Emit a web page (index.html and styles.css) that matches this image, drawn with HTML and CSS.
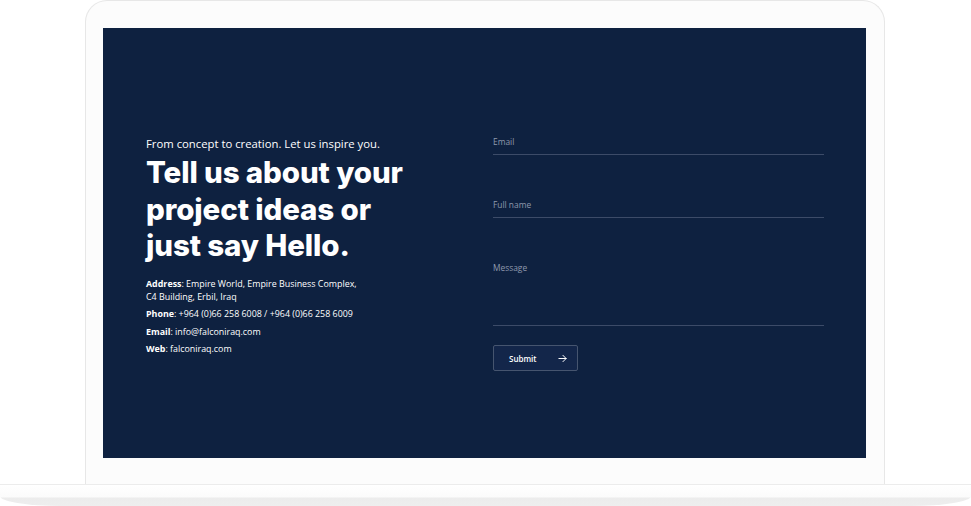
FILE: index.html
```html
<!DOCTYPE html>
<html lang="en">
<head>
<meta charset="utf-8">
<title>Contact</title>
<link rel="stylesheet" href="styles.css">
</head>
<body>
<div class="device">
  <div class="lid">
    <div class="screen">
      <div class="intro">
        <p class="kicker">From concept to creation. Let us inspire you.</p>
        <h1 class="title">Tell us about your project ideas or just say Hello.</h1>
        <div class="details">
          <p><b>Address</b>: Empire World, Empire Business Complex,<br>C4 Building, Erbil, Iraq</p>
          <p><b>Phone</b>: +964 (0)66 258 6008 / +964 (0)66 258 6009</p>
          <p><b>Email</b>: info@falconiraq.com</p>
          <p><b>Web</b>: falconiraq.com</p>
        </div>
      </div>
      <form class="form">
        <label class="field">Email</label>
        <label class="field">Full name</label>
        <label class="field field-msg">Message</label>
        <button type="button" class="submit">Submit
          <svg class="arrow" width="9" height="9" viewBox="0 0 10 10" fill="none" stroke="#ffffff" stroke-width="1.1" stroke-linecap="round" stroke-linejoin="round"><path d="M1 5h8M5.5 1.5L9 5l-3.5 3.5"/></svg>
        </button>
      </form>
    </div>
  </div>
  <div class="base"></div>
</div>
</body>
</html>
```
FILE: styles.css
```css
* { box-sizing: border-box; }
html, body { margin: 0; padding: 0; background: #ffffff; }
body { width: 971px; height: 506px; overflow: hidden; font-family: "Open Sans", "Liberation Sans", sans-serif; }

.device { width: 971px; height: 506px; display: flex; flex-direction: column; }

.lid {
  margin-left: 85px;
  width: 800px;
  height: 484px;
  padding: 27px 18px 0 17px;
  background: #fcfcfc;
  border: 1px solid #e7e7e7;
  border-bottom: none;
  border-radius: 22px 22px 0 0;
}

.screen {
  width: 763px;
  height: 430px;
  background: #0e2140;
  display: flex;
  padding: 106px 0 0 43px;
}

.intro { width: 347px; color: #ffffff; }
.kicker { margin: 2px 0 0; font-size: 11.3px; line-height: 16px; }
.title {
  margin: 2px 0 0;
  font-family: Inter, "Open Sans", sans-serif;
  font-weight: 800;
  font-size: 29.5px;
  line-height: 36.5px;
  letter-spacing: -0.1px;
  width: 270px;
}
.details { margin-top: 13px; font-size: 8.9px; line-height: 13px; }
.details p { margin: 0 0 4.5px; }
.details b { font-weight: 700; }

.form { width: 331px; display: flex; flex-direction: column; padding-top: 1px; }
.field {
  display: block;
  color: #8f99ad;
  font-size: 8.4px;
  line-height: 11px;
  height: 20px;
  padding-top: 1px;
  border-bottom: 1px solid #3c4b68;
  margin-bottom: 43px;
}
.field-msg { height: 65px; margin-bottom: 19px; }

.submit {
  width: 85px;
  height: 26px;
  padding: 0 0 0 15px;
  display: flex;
  align-items: center;
  gap: 21px;
  background: #13264a;
  border: 1px solid #46556f;
  border-radius: 2px;
  color: #ffffff;
  font-family: "Open Sans", sans-serif;
  font-size: 8px;
  font-weight: 600;
}
.arrow { display: block; }

.base {
  width: 971px;
  height: 22px;
  background: linear-gradient(#ffffff 0, #fbfbfb 12px, #ececec 13px, #eeeeee 100%);
  border-top: 1px solid #ececec;
  border-radius: 0 0 60px 60px / 0 0 10px 10px;
}
```
